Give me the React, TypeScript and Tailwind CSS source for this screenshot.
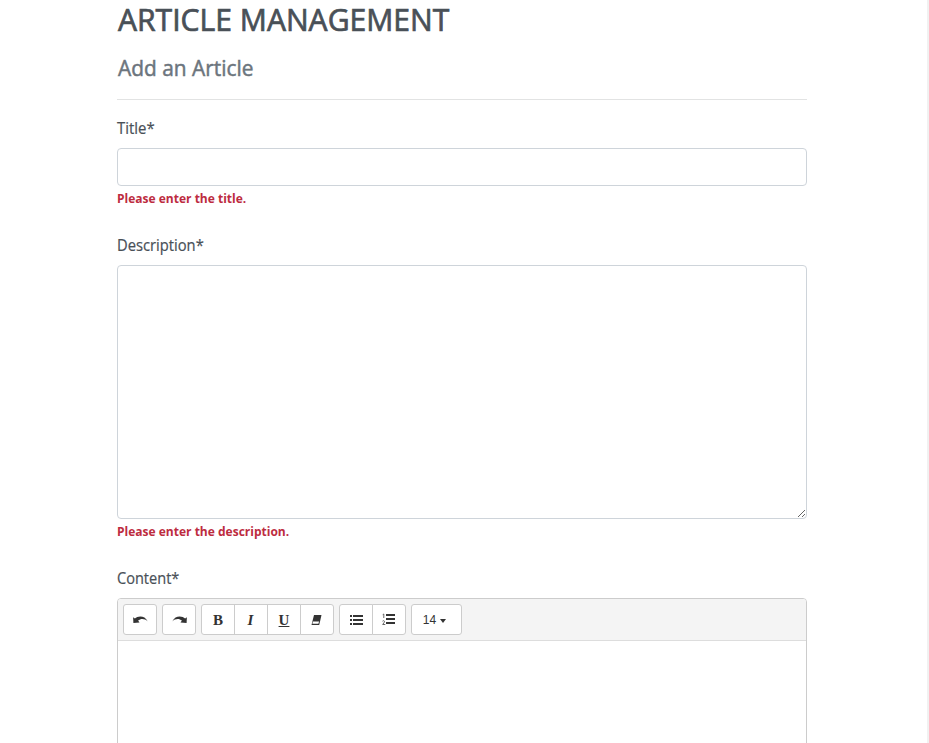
import React from 'react';

function Label({ children, width }: { children: string; width: string }) {
  return (
    <label className="block h-6 text-[15.4px] leading-[25px] text-[#495057] [-webkit-text-stroke:0.2px_#495057]">
      <span className={`inline-block origin-left whitespace-nowrap ${width}`}>{children}</span>
    </label>
  );
}

function FieldError({ children }: { children: string }) {
  return (
    <div className="mt-[2px] mb-px h-5 text-[13.2px] font-bold leading-5 text-[#bd2c3f]">
      <span className="inline-block origin-left scale-x-[0.911] whitespace-nowrap">{children}</span>
    </div>
  );
}

function ToolButton({ children, className = '' }: { children: React.ReactNode; className?: string }) {
  return (
    <button type="button" className={`flex h-[31px] items-center justify-center border border-[#ccc] bg-white text-[#333] ${className}`}>
      {children}
    </button>
  );
}

function Undo({ flip = false }: { flip?: boolean }) {
  return (
    <svg width="15" height="8" viewBox="0 0 15 8" className={flip ? 'mt-px -scale-x-100' : 'mt-px'}>
      <path d="M.1 1.2 1.9 2.5C4.8-.3 11.8-.9 14.7 5.4 11.8 2.5 7.8 2.3 5.1 4.6L6.5 6.4.4 7.1Z" fill="#333" />
    </svg>
  );
}

export default function App() {
  return (
    <div className="flex h-[743px] overflow-hidden bg-white font-['Open_Sans','Noto_Sans',sans-serif]">
      <main className="ml-[117px] w-[690px]">
        <h1 className="h-[39px] pl-px text-[30.5px] leading-[39px] text-[#495057] [-webkit-text-stroke:0.7px_#495057]">
          <span className="inline-block origin-left scale-x-[0.987] whitespace-nowrap">ARTICLE MANAGEMENT</span>
        </h1>
        <h2 className="mt-[14px] h-7 pl-px text-[22px] leading-7 text-[#6c757d] [-webkit-text-stroke:0.5px_#6c757d]">
          <span className="inline-block origin-left scale-x-[0.949] whitespace-nowrap">Add an Article</span>
        </h2>
        <hr className="mb-4 mt-[18px] border-[#e2e3e3]" />
        <Label width="scale-x-[0.97]">Title*</Label>
        <input className="mt-2 block h-[38px] w-full rounded-[4px] border border-[#ced4da] px-3 outline-none" />
        <FieldError>Please enter the title.</FieldError>
        <div className="h-6" />
        <Label width="scale-x-[0.957]">Description*</Label>
        <textarea className="mt-2 block h-[254px] w-full resize rounded-[4px] border border-[#ced4da] px-3 outline-none" />
        <FieldError>Please enter the description.</FieldError>
        <div className="h-6" />
        <Label width="scale-x-[0.946]">Content*</Label>
        <section className="mt-2 h-[200px] rounded-t-[4px] border border-[#ccc]">
          <div className="flex h-[42px] gap-[5px] rounded-t-[3px] border-b border-[#ddd] bg-[#f4f4f4] px-[5px] pt-[5px]">
            <ToolButton className="w-[34px] rounded-[3px]"><Undo /></ToolButton>
            <ToolButton className="w-[34px] rounded-[3px]"><Undo flip /></ToolButton>
            <div className="flex font-['Liberation_Serif',serif] text-[15px] font-bold">
              <ToolButton className="w-[34px] rounded-l-[3px] pt-px">B</ToolButton>
              <ToolButton className="-ml-px w-[34px] pt-px"><span className="-ml-px italic">I</span></ToolButton>
              <ToolButton className="-ml-px w-[34px] pt-px"><span className="underline decoration-1 underline-offset-1">U</span></ToolButton>
              <ToolButton className="-ml-px w-[34px] rounded-r-[3px]">
                <svg width="11" height="10" viewBox="0 0 11 10" className="mr-px mt-px">
                  <path d="M3 0h7.5L8.2 10H.5Z" fill="#333" />
                  <path d="M1.9 6.4h6.2l-.7 2.4H1.4Z" fill="#fff" />
                </svg>
              </ToolButton>
            </div>
            <div className="flex">
              <ToolButton className="w-[34px] rounded-l-[3px] pt-px">
                <svg width="13" height="10" viewBox="0 0 13 10" fill="#333">
                  <path d="M0 0h2v2H0zM3 0h10v2H3zM0 4h2v2H0zM3 4h10v2H3zM0 8h2v2H0zM3 8h10v2H3z" />
                </svg>
              </ToolButton>
              <ToolButton className="-ml-px w-[34px] rounded-r-[3px]">
                <svg width="14" height="13" viewBox="0 0 14 13" fill="#333">
                  <path d="M4 1h9v2H4zM4 5h9v2H4zM4 9h9v2H4z" />
                  <path d="M.7 1.7 1.8 1V5M.5 8.2C1.6 7 3.2 8.1 2.2 9.4L.7 11.5H3.3" fill="none" stroke="#555" strokeWidth=".9" />
                </svg>
              </ToolButton>
            </div>
            <ToolButton className="w-[51px] gap-1 rounded-[3px] pr-1">
              <span className="font-['Liberation_Sans',sans-serif] text-[12px] leading-[18px]">14</span>
              <svg width="6" height="4" viewBox="0 0 6 4" className="mt-[2px]"><path d="M0 0h6L3 4Z" fill="#333" /></svg>
            </ToolButton>
          </div>
        </section>
      </main>
      <div className="ml-auto w-[2px] bg-[#f1f1f1]" />
    </div>
  );
}
